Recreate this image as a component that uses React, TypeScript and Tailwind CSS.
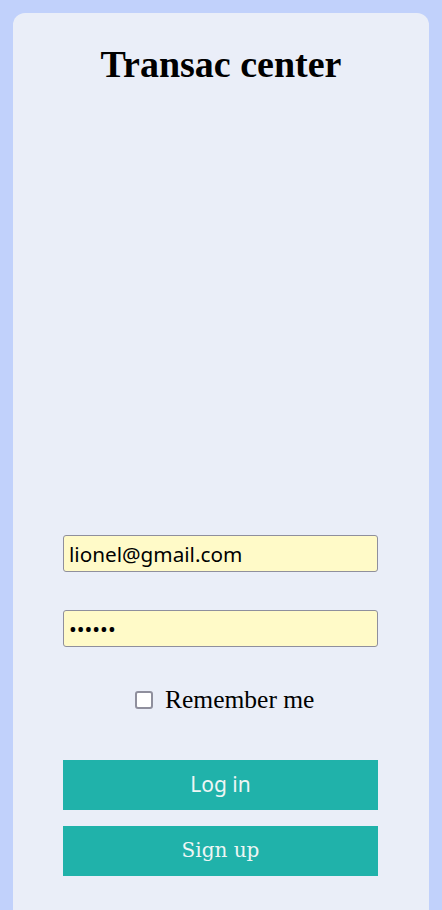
export default function App() {
  return (
    <div className="min-h-screen bg-[#c1d1fb] px-[13px] pt-[13px]">
      <div className="flex min-h-[897px] flex-col items-center rounded-t-[12px] bg-[#eaeef8] px-[50px]">
        {/* Title */}
        <h1 className="mt-[29px] font-['Liberation_Serif',serif] text-[38px] font-bold leading-[44px] text-black">
          Transac center
        </h1>

        {/* Form */}
        <form className="mt-[449px] flex flex-col items-start self-stretch">
          <input
            type="email"
            defaultValue="lionel@gmail.com"
            className="h-[37px] w-[315px] rounded-[3px] border border-[#8f8f9d] bg-[#fffac8] px-[5px] font-['Noto_Sans',sans-serif] text-[20.7px] text-black outline-none"
          />
          <input
            type="password"
            defaultValue="secret"
            className="mt-[38px] h-[37px] w-[315px] rounded-[3px] border border-[#8f8f9d] bg-[#fffac8] px-[5px] font-['Noto_Sans',sans-serif] text-[20.7px] text-black outline-none"
          />

          <label className="mt-[37px] ml-[72px] flex items-center gap-[12px] font-['Liberation_Serif',serif] text-[25.5px] leading-[32px] text-black">
            <span className="h-[18px] w-[18px] rounded-[3px] border-2 border-[#8f8f9d] bg-white" />
            Remember me
          </label>

          <button
            type="button"
            className="mt-[44px] h-[50px] w-[315px] bg-[#20b2aa] font-['Noto_Sans',sans-serif] text-[21px] text-[#eef6f5]"
          >
            Log in
          </button>
          <button
            type="button"
            className="mt-[16px] h-[50px] w-[315px] bg-[#20b2aa] pb-[3px] font-['DejaVu_Serif',serif] text-[20px] text-[#eef6f5]"
          >
            Sign up
          </button>
        </form>
      </div>
    </div>
  );
}
